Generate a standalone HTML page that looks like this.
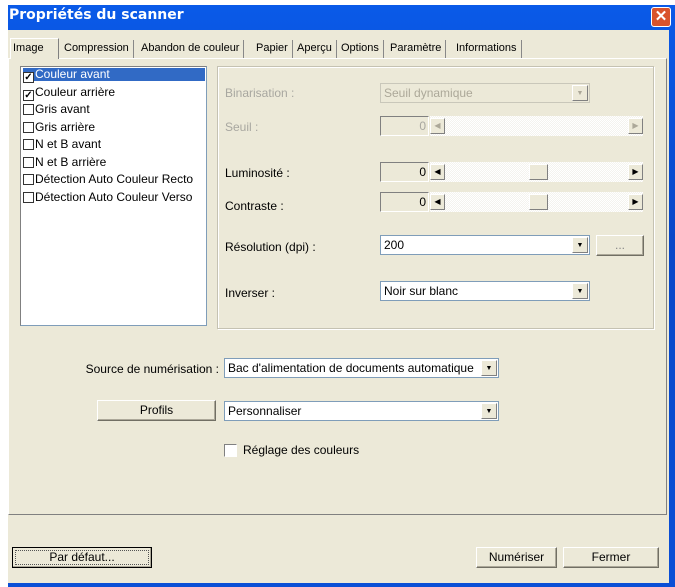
<!DOCTYPE html>
<html><head><meta charset="utf-8"><style>
*{box-sizing:border-box;margin:0;padding:0}
body{width:675px;height:587px;background:#fff;position:relative;overflow:hidden;font-family:"Liberation Sans",Arial,sans-serif;font-size:12px;color:#000}
.a{position:absolute}
.win{left:8px;top:5px;width:667px;height:582px;background:linear-gradient(#0a5ae8,#0847c8 40%,#0a4fd6)}
.client{left:8px;top:30px;width:661px;height:553px;background:#ECE9D8}
.title{left:9px;top:7px;color:#fff;font-weight:bold;font-size:14px;font-family:"DejaVu Sans","Liberation Sans",sans-serif}
.close{left:651px;top:7px;width:20px;height:20px;background:#d9532c;border:1px solid #fff;border-radius:3px;color:#fff;font-weight:bold;font-size:15px;text-align:center;line-height:17px}
.tab{top:40px;height:18px;line-height:16px;padding:0 4px;border-right:1px solid #888;font-size:11px}
.panel{left:8px;top:58px;width:659px;height:457px;border:1px solid #fff;border-right:1px solid #808080;border-bottom:1px solid #808080}
.list{left:20px;top:66px;width:187px;height:260px;background:#fff;border:1px solid #7f9db9;border-top-color:#808080;border-left-color:#808080}
.li{position:absolute;left:2px;height:13px;line-height:13px;width:182px}
.cb{display:inline-block;width:11px;height:11px;border:1px solid #333;background:#fff;vertical-align:-2px;margin-right:1px;position:relative;font-size:10px;line-height:9px;text-align:center;font-weight:bold}
.grp{left:217px;top:66px;width:437px;height:263px;border:1px solid #c5c2b2;box-shadow:inset 1px 1px 0 #fff,1px 1px 0 #fff}
.lbl{left:225px}
.dim{color:#a8a7a0}
.combo{height:20px;background:#fff;border:1px solid #7f9db9;padding-left:3px;line-height:18px}
.combo.d{background:#ECE9D8;border-color:#c9c7ba;color:#aca899}
.arr{position:absolute;right:1px;top:1px;width:16px;height:16px;background:#ECE9D8;border:1px solid;border-color:#fff #808080 #808080 #fff;font-size:7px;text-align:center;line-height:15px}
.edit{width:49px;height:20px;background:#ECE9D8;border:1px solid;border-color:#808080 #fff #fff #808080;text-align:right;padding-right:2px;line-height:18px}
.sb{height:20px;width:213px;background:repeating-conic-gradient(#f4f3ee 0 25%,#fff 0 50%) 0 0/2px 2px}
.sbb{position:absolute;top:2px;width:15px;height:16px;background:#ECE9D8;border:1px solid;border-color:#fff #808080 #808080 #fff;font-size:8px;text-align:center;line-height:14px}
.btn{height:21px;background:#ECE9D8;border:1px solid;border-color:#fff #716f64 #716f64 #fff;box-shadow:inset -1px -1px 0 #aca899;text-align:center;line-height:19px}
</style></head><body>
<div class="a win"></div>
<div class="a title">Propriétés du scanner</div>
<div class="a close">✕</div>
<div class="a client"></div>
<div class="a panel"></div>
<div class="a" style="left:10px;top:38px;width:49px;height:21px;background:#ECE9D8;border:1px solid #fff;border-bottom:none;border-right:1px solid #808080"></div>
<div class="a" style="left:13px;top:42px;font-size:11px">Image</div>
<div class="a tab" style="left:60px">Compression</div>
<div class="a tab" style="left:137px">Abandon de couleur</div>
<div class="a tab" style="left:252px">Papier</div>
<div class="a tab" style="left:293px">Aperçu</div>
<div class="a tab" style="left:337px">Options</div>
<div class="a tab" style="left:386px">Paramètre</div>
<div class="a tab" style="left:452px">Informations</div>
<div class="a list">
<div class="li" style="top:1px;background:#316ac5;color:#fff"><span class="cb" style="color:#000">✓</span>Couleur avant</div>
<div class="li" style="top:19px"><span class="cb">✓</span>Couleur arrière</div>
<div class="li" style="top:36px"><span class="cb"></span>Gris avant</div>
<div class="li" style="top:54px"><span class="cb"></span>Gris arrière</div>
<div class="li" style="top:71px"><span class="cb"></span>N et B avant</div>
<div class="li" style="top:89px"><span class="cb"></span>N et B arrière</div>
<div class="li" style="top:106px"><span class="cb"></span>Détection Auto Couleur Recto</div>
<div class="li" style="top:124px"><span class="cb"></span>Détection Auto Couleur Verso</div>
</div>
<div class="a grp"></div>
<div class="a lbl dim" style="top:86px">Binarisation :</div>
<div class="a lbl dim" style="top:120px">Seuil :</div>
<div class="a lbl" style="top:166px">Luminosité :</div>
<div class="a lbl" style="top:199px">Contraste :</div>
<div class="a lbl" style="top:240px">Résolution (dpi) :</div>
<div class="a lbl" style="top:286px">Inverser :</div>
<div class="a combo d" style="left:380px;top:83px;width:210px">Seuil dynamique<span class="arr" style="color:#aca899">▼</span></div>
<div class="a edit dim" style="left:380px;top:116px">0</div>
<div class="a sb" style="left:430px;top:116px"><span class="sbb" style="left:0;color:#aca899">◀</span><span class="sbb" style="right:0;color:#aca899">▶</span></div>
<div class="a edit" style="left:380px;top:162px">0</div>
<div class="a sb" style="left:430px;top:162px"><span class="sbb" style="left:0">◀</span><span class="sbb" style="left:99px;width:19px"></span><span class="sbb" style="right:0">▶</span></div>
<div class="a edit" style="left:380px;top:192px">0</div>
<div class="a sb" style="left:430px;top:192px"><span class="sbb" style="left:0">◀</span><span class="sbb" style="left:99px;width:19px"></span><span class="sbb" style="right:0">▶</span></div>
<div class="a combo" style="left:380px;top:235px;width:210px">200<span class="arr">▼</span></div>
<div class="a btn" style="left:596px;top:235px;width:48px;color:#888">...</div>
<div class="a combo" style="left:380px;top:281px;width:210px">Noir sur blanc<span class="arr">▼</span></div>
<div class="a" style="left:70px;top:362px;width:149px;text-align:right;white-space:nowrap">Source de numérisation :</div>
<div class="a combo" style="left:224px;top:358px;width:275px">Bac d'alimentation de documents automatique<span class="arr">▼</span></div>
<div class="a btn" style="left:97px;top:400px;width:119px">Profils</div>
<div class="a combo" style="left:224px;top:401px;width:275px">Personnaliser<span class="arr">▼</span></div>
<div class="a" style="left:224px;top:444px;width:13px;height:13px;background:#fff;border:1px solid;border-color:#808080 #fff #fff #808080"></div>
<div class="a" style="left:243px;top:443px">Réglage des couleurs</div>
<div class="a btn" style="left:12px;top:547px;width:140px;border:1px solid #000;outline:1px dotted #555;outline-offset:-4px">Par défaut...</div>
<div class="a btn" style="left:476px;top:547px;width:81px">Numériser</div>
<div class="a btn" style="left:563px;top:547px;width:96px">Fermer</div>
</body></html>
